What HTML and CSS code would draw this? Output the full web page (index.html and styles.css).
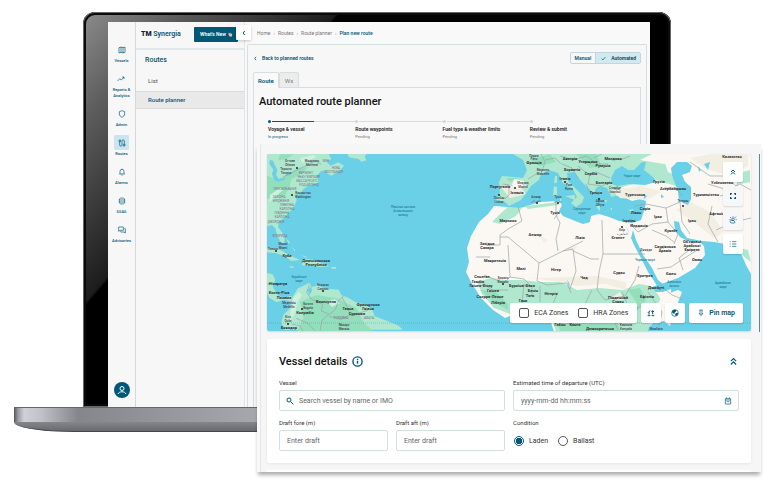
FILE: index.html
```html
<!DOCTYPE html>
<html lang="en">
<head>
<meta charset="utf-8">
<title>TM Synergia – Plan new route</title>
<link rel="stylesheet" href="styles.css">
</head>
<body>
<div class="stage">
  <div class="laptop">
    <div class="screen">
      <nav class="rail">
        <a class="rail-item" href="#"><span class="tile"><svg viewBox="0 0 24 24"><path d="M3 5l6-2 6 2 6-2v16l-6 2-6-2-6 2zM9 3v16M15 5v16"/></svg></span>Vessels</a>
        <a class="rail-item" href="#"><span class="tile"><svg viewBox="0 0 24 24"><path d="M2 18l6-7 5 4 8-9M15 6h6v6"/></svg></span>Reports &amp;<br>Analytics</a>
        <a class="rail-item" href="#"><span class="tile"><svg viewBox="0 0 24 24"><path d="M12 2l8 3v7c0 5-4 8-8 10-4-2-8-5-8-10V5z"/></svg></span>Admin</a>
        <a class="rail-item" href="#"><span class="tile tile-on"><svg viewBox="0 0 24 24"><path d="M5 8v10a3 3 0 0 0 7 0V6a3 3 0 0 1 7 0v10M3 3h5v5H3zM16 16h5v5h-5z"/></svg></span>Routes</a>
        <a class="rail-item" href="#"><span class="tile"><svg viewBox="0 0 24 24"><path d="M4 18h16M6 18v-8a6 6 0 0 1 12 0v8M12 2v2M10 21h4"/></svg></span>Alarms</a>
        <a class="rail-item" href="#"><span class="tile"><svg viewBox="0 0 24 24"><path d="M4 6c0-4 16-4 16 0v12c0 4-16 4-16 0zM4 9h16M4 15h16"/></svg></span>SSAS</a>
        <a class="rail-item" href="#"><span class="tile"><svg viewBox="0 0 24 24"><path d="M2 3h14v10H6l-4 3zM19 8h3v13l-4-3H8v-2"/></svg></span>Advisories</a>
        <button class="avatar" aria-label="Account"><svg viewBox="0 0 24 24"><circle cx="12" cy="9" r="4"/><path d="M4 20c2-6 14-6 16 0"/></svg></button>
      </nav>
      <aside class="panel">
        <div class="panel-head">
          <span class="logo"><b>TM</b> Synergia</span>
          <button class="news">What's New <svg viewBox="0 0 12 12"><path d="M2 1l4 3V1l4 5-1 5H4L1 6z" fill="#e9c9bd"/><path d="M3 3l4 5" stroke="#80606a"/></svg></button>
        </div>
        <h2 class="panel-title">Routes</h2>
        <a class="panel-link" href="#">List</a>
        <a class="panel-link panel-link-on" href="#">Route planner</a>
      </aside>
      <main class="main">
        <div class="crumb-row">
          <button class="collapse" aria-label="Collapse menu"><svg viewBox="0 0 24 24"><path d="M15 4l-7 8 7 8"/></svg></button>
          <a href="#">Home</a><i>›</i><a href="#">Routes</a><i>›</i><a href="#">Route planner</a><i>›</i><a class="here" href="#">Plan new route</a>
        </div>
        <div class="frame">
          <div class="frame-top">
            <a class="back" href="#"><svg viewBox="0 0 24 24"><path d="M15 4l-7 8 7 8"/></svg>Back to planned routes</a>
            <div class="toggle"><button>Manual</button><button class="on"><svg viewBox="0 0 24 24"><path d="M3 12l6 7L21 5"/></svg>Automated</button></div>
          </div>
          <div class="tabs"><button class="tab tab-on">Route</button><button class="tab">Wx</button></div>
          <div class="tab-body">
            <h1>Automated route planner</h1>
            <ol class="steps">
              <li class="step active"><span class="track"></span><b>Voyage &amp; vessel</b><small>In progress</small></li>
              <li class="step"><span class="track"></span><b>Route waypoints</b><small>Pending</small></li>
              <li class="step"><span class="track"></span><b>Fuel type &amp; weather limits</b><small>Pending</small></li>
              <li class="step"><span class="track last"></span><b>Review &amp; submit</b><small>Pending</small></li>
            </ol>
          </div>
        </div>
      </main>
    </div>
  </div>
  <div class="base"><div class="base-top"></div><div class="base-foot"></div></div>

  <div class="sheet">
    <div class="map">
      <svg class="chart" viewBox="267 154 484 177" preserveAspectRatio="xMidYMid slice" role="img" aria-label="Map">
        <rect class="sea" x="267" y="154" width="484" height="177"/>
        <!-- North and South America -->
        <g transform="translate(260 145) scale(.33333)">
          <path class="green" d="M20 26H205L214 42 200 52 212 62 235 52 252 62 238 78 214 92 196 82 204 74 184 78 170 92 176 112 162 118 142 124 128 134 122 146 106 150 110 166 102 186 88 202 70 220 56 234 54 246 66 262 74 280 72 296 62 292 52 272 46 250 36 240 20 244Z"/>
          <path class="green" d="M262 26H320L314 36 320 46 304 50 296 42 280 40 266 36Z"/>
          <path class="deep" d="M20 90l30 14 34-16 30-20 30-2-20 22-30 14-6 26-14 24-54 10ZM60 28l40 0-20 14-26 4Z"/>
          <path class="water" d="M30 44l10 4 4 12 8 14-4 16 8 12 22-4-4 6-20 6-12-6-6-18 4-12-12-18ZM78 86l22-4-14 10-10 2Z"/>
          <path class="green" d="M20 311l22-2 24 8 22 14 32 14-26 3-18-13-26-10-30-3ZM126 344l28-2 24 8 30 14-26 2-18-2-38-3ZM88 362l16 4-10 4ZM214 366l14 0 0 5-14 0ZM78 280l12 12-4 4ZM96 306l10 10-2 3ZM122 330l20 6-4 2Z"/>
          <path class="green" d="M20 384l18 4 8 16-8 20 14 26 22 8 20-6 8 14-12 2-20-4-20 8-22-14-8-18ZM100 452l14-22 34-16 6 10-12 12 6 14 8-12-2-12 26-6 10 10 46 4 8 16 20 8 24 14 30 8 18 12 8 22 38 14 34 14 12 12H74l-10-20 6-24 18-18 8-26Z"/>
          <path class="deep" d="M120 470l50-20 60 10 60 30 20 40 30 30H110l20-40Z"/>
          <path class="cloud" d="M100 458l16-18 10 10-14 22-6 30-16 30 2-36ZM200 470l24-8 16 12-24 12ZM300 500l22 4-10 10ZM30 150l30-22 8 8-40 36ZM120 40l40-10 10 6-42 18Z"/>
          <path class="line" d="M70 96l22-12 46-22 30-14 16 10M148 420l-8 22 14 20 34 16-4 20 24 10 18-14 10-28 18-16M206 508l-20 18-6 32M246 456l12 24 14 30 26-6 26-8M272 510l-30 14-34-10M108 520l34 14 26 26M20 418l22-4M60 458l8-8M96 538l24 4 10 18"/>
        </g>
        <!-- Europe, Africa, Arabia and Asia -->
        <path class="sand" d="M508 207l8 2 8-2 16-5 19-1 3 4-3 6 4 5 12 5 8 3 7-2 1-6 8-2 10 3 10 4 13 2 9-3 4-12 1-7-6-2-8 2-8-4-10-2-4-10 2-6 8-6 8-4V154H751V274l-5-9-6-14-9-3-6-4-11-2-12-1-15-3-6-8-2-8-5-1 1 9 5 7 8 4 7 1 4-1 5 5 1 9-10 13-17 10-14 5-12 4-6 2 8 3 9 0 8-3 0 7-7 14-12 14-14 12H556l-4-10-3-12-10-4-12 4-12 0-10 4-12-8-12-12-10-16-5-10 3-10-2-14 4-12 8-14 9-8 6-8Z"/>
        <path class="green" d="M513 154l10 6 4 10-4 8-21-2-3 6 1 10-4 8 9 2 4 4 12-6 6-8 4-6 8-6 2-6 8-4 9 3 5 10 9 5 5 9-6 6 5 4 6-4 2-6-8-8-8-8-1-8 7-1 8 10 10 10 8 12 6 8 6-8-2-6 8-4 2-6 6-2 8-2V154Z"/>
        <path class="green" d="M608 154h48l8 6 4 12 8 4 10 6 4 8-14-4-20-6-12 2-30 4-14-4ZM555 176l2 0 0 7-3 0ZM554 186l3 1 0 8-4 0ZM560 198l2 2-2 3ZM565 196l10-1 0 5ZM602 208l10 0 0 2-10 0ZM628 210l6-1-2 3Z"/>
        <path class="green" d="M477 282l14-4 14 2 18 0 16 2 22 0 16 8 22-2 24 2 16-6 12 2 8 10 6 14-12 10-6 12H556l-6-20-12-4-28 6-16-6-12-14ZM508 207l14 1-6 8-16 8-8-2 8-8ZM524 206l36-4-2 3-30 4ZM740 248l8 2 3 12-8-6ZM728 176l22-6 0 12-10 2ZM622 174l32-6 8 6-20 4Z"/>
        <path class="deep" d="M480 290l16 2 12 12 0 6-14-8ZM556 310l30 0 30 6 4 15H560ZM576 154h20l6 12-12 2ZM628 290l12-2 6 12-6 8ZM506 178l12 0-8 4ZM530 160l20-6 6 8-16 4Z"/>
        <path class="tan" d="M530 278l30 4 16 4 30-2 20 6 0-8-30-6-60 2ZM676 210l14-8 20 10 14 20-10 6-20-16ZM690 158l20-4h38l0 12-20 10-24-8ZM612 190l30-4 20 6-16 8-26-2ZM608 300l12-8 4 8ZM500 186l20 0 6 8-16 4ZM660 318l14-12-4 20ZM566 248l12-2-6 6ZM540 236l8 4-4 3Z"/>
        <path class="sand" d="M514 179l10 2 2 5-8 3-6-4ZM640 160l12-6h16l4 8-8 2ZM662 296l16-6 4 2-10 26-12 4-6-10Z"/>
        <!-- Inland and marginal seas -->
        <path class="water" d="M611 178l4-8 7-4 6 4 6 0 8-8 4 0-2 8 9 7 3 5-11 3-16-1-12 2-5-2ZM671 168l6-6 10 0 5 4-2 6-8 3 3 7 6 5 0 12-3 6-9-4-1-10-4-10-2-6ZM625 225l4 8 5 12 9 17 5 10 8 12 3 7 7-1-2-5-6-5-6-12-9-13-7-15-3-10-2 8-3-8ZM704 164l6-2-2 8ZM698 166l3 4-2 2ZM600 186l7 2 6 12-3 12-12-2-5-12 3-10ZM614 188l6 0 0 2-6 0ZM644 194l3 2-3 3ZM661 194l3 3-3 1ZM567 279l3 6-1 2ZM635 303l4 6-3 2Z"/>
        <path class="green" d="M598 190l4 2-2 3ZM604 200l3 0-1 3ZM596 204l4 2 0 5-3-3Z"/>
        <path class="line" d="M518 207l4 14-14 8-8 6v10h-14M500 237l8 0 31 26 24-12 20-10M508 245l2 32-6 6-20-8M476 257h14M556 201l0 14 4 8-4 16 2 12M554 219l6-8M563 251l10-2 3 22-6 18M573 251l18 8 8 0M602 220l1 34h42M603 254l-4 18-2 18 8 10 20-4 10-16 4-14M539 263l-2 18 10 4 20-2 4 10M510 277l14 2 8 8 0 10M524 284l-2 20M484 284l8 6 16 0M540 286l0 16M634 206l12-2 20 4 2 14-16 2-14 8-6-6M666 208l14-6 2 20 8 12M668 222l10 12-4 10M674 242l-8-6-14-6M657 269l14-2 12-8 16-10M683 270l-4-12 10-8M660 285l12 10 10 4M648 292l14 20-4 18M622 292l6 14 20 2M708 184l20 6 12-6 11 6M716 230l18-8 17-4M712 206l-4 18 10 18M690 162l20 14 16 0 10 10M664 188l12 0 6 8M503 184l6 1 0 10-4 4M528 179l10-6M541 154l4 8-4 12M545 160l10-2 6 6M560 156l14 4 12-4 12 8 10 0M578 166l10 8 8-2 14 6M590 174l-2 10 14 2 8-4M594 158l8-4M586 184l4 8M562 164l10 4 6 10M620 160l10-4M592 290l-6 12 0 12M558 292l-6 14M612 316l6 14M740 178l-6 14-14 4"/>
        <path class="equator" d="M267 323H751"/>
        <g class="dots"><circle cx="297" cy="168" r="1"/><circle cx="292" cy="195" r="1"/><circle cx="276" cy="251" r="1"/><circle cx="323" cy="291" r="1"/><circle cx="302" cy="309" r="1"/><circle cx="288" cy="324" r="1"/><circle cx="499" cy="195" r="1"/><circle cx="515" cy="188" r="1"/><circle cx="537" cy="203" r="1"/><circle cx="558" cy="203" r="1"/><circle cx="565" cy="182" r="1"/><circle cx="599" cy="199" r="1"/><circle cx="622" cy="227" r="1"/><circle cx="683" cy="206" r="1"/><circle cx="503" cy="284" r="1"/></g>
        <g class="region">
          <text x="326" y="162">МЕН</text><text x="306" y="174">ВЕРМОНТ</text><text x="336" y="169">НОВА</text><text x="334" y="173">ШОТЛАНДІЯ</text><text x="309" y="178">НЬЮ-ГЕМПШИР</text><text x="307" y="182">МАССАЧУСЕТС</text><text x="309" y="186">РОД-АЙЛЕНД</text><text x="285" y="190">ПЕНСИЛЬВАНІЯ</text><text x="279" y="198">ЗАХІДНА</text><text x="281" y="202">ВІРДЖИНІЯ</text><text x="287" y="206">ПІВНІЧНА</text><text x="287" y="210">КАРОЛІНА</text><text x="282" y="214">ПІВДЕННА</text><text x="282" y="218">КАРОЛІНА</text><text x="276" y="223">ДЖОРДЖІЯ</text><text x="280" y="237">ФЛОРИДА</text><text x="341" y="319">РОРАЙМА</text><text x="369" y="319">АМАПА</text>
        </g>
        <g class="ocean">
          <text x="403" y="208">Північна частина</text><text x="403" y="212">Атлантичного</text><text x="403" y="216">океану</text><text x="299" y="278">Карибське</text><text x="299" y="282">море</text><text x="582" y="210">Середземне</text><text x="582" y="214">море</text><text x="632" y="177">Чорне море</text><text x="723" y="284">Аравійське</text><text x="723" y="288">море</text><text x="674" y="283">Аденська</text><text x="674" y="287">затока</text><text x="645" y="261">Червоне море</text>
        </g>
        <g class="city">
          <text x="290" y="162">Оттава</text><text x="290" y="166">Ottawa</text><text x="312" y="162">Монреаль</text><text x="312" y="166">Montreal</text><text x="286" y="170">Торонто</text><text x="286" y="174">Toronto</text><text x="303" y="194">Вашингтон</text><text x="303" y="198">Washington</text><text x="283" y="245">Маямі</text><text x="283" y="249">Miami</text><text x="273" y="250">Гавана</text><text x="323" y="286">Каракас</text><text x="323" y="290">Caracas</text><text x="289" y="304">Медельїн</text><text x="289" y="308">Medellin</text><text x="308" y="305">Богота</text><text x="308" y="309">Bogota</text><text x="288" y="318">Кіто</text><text x="288" y="322">Quito</text><text x="344" y="326">Манаус</text><text x="344" y="330">Manaus</text><text x="534" y="157">Париж</text><text x="534" y="160">Paris</text><text x="523" y="184">Мадрид</text><text x="523" y="188">Madrid</text><text x="499" y="199">Лісабон</text><text x="499" y="203">Lisboa</text><text x="543" y="171">Марсель</text><text x="543" y="175">Marseille</text><text x="569" y="186">Рим</text><text x="569" y="190">Roma</text><text x="536" y="198">Алжир</text><text x="536" y="202">الجزائر</text><text x="558" y="198">Туніс</text><text x="558" y="202">تونس</text><text x="600" y="202">Афіни</text><text x="600" y="206">Αθήνα</text><text x="615" y="189">Стамбул</text><text x="615" y="193">İstanbul</text><text x="622" y="231">Каїр</text><text x="622" y="235">القاهرة</text><text x="683" y="202">Тегеран</text><text x="646" y="251">Джидда</text><text x="503" y="279">Бамако</text><text x="503" y="283">Bamako</text><text x="626" y="326">Кампала</text><text x="626" y="330">Kampala</text><text x="656" y="330">Момбаса</text>
        </g>
        <g class="country">
          <text x="287" y="257">Куба</text><text x="316" y="262">Домініканська</text><text x="316" y="266">Республіка</text><text x="278" y="285">Нікарагуа</text><text x="279" y="294">Коста-Ріка</text><text x="284" y="299">Панама</text><text x="326" y="303">Венесуела</text><text x="305" y="314">Колумбія</text><text x="348" y="310">Гаяна</text><text x="368" y="306">Французька</text><text x="368" y="310">Гвіана</text><text x="357" y="315">Суринам</text><text x="289" y="329">Еквадор</text>
          <text x="534" y="164">Франція</text><text x="570" y="160">Австрія</text><text x="588" y="163">Угорщина</text><text x="613" y="160">Молдова</text><text x="603" y="167">Румунія</text><text x="572" y="171">Хорватія</text><text x="591" y="175">Сербія</text><text x="604" y="184">Болгарія</text><text x="565" y="180">Італія</text><text x="500" y="188">Португалія</text><text x="517" y="194">Іспанія</text><text x="596" y="194">Греція</text><text x="635" y="196">Туреччина</text><text x="659" y="183">Грузія</text><text x="673" y="190">Азербайджан</text><text x="706" y="196">Туркменістан</text><text x="722" y="184">Узбекистан</text><text x="732" y="158">Казахстан</text><text x="645" y="210">Сирія</text><text x="636" y="214">Ліван</text><text x="629" y="222">Ізраїль</text><text x="639" y="227">Йорданія</text><text x="658" y="218">Ірак</text><text x="692" y="222">Іран</text><text x="720" y="215">Афганістан</text><text x="671" y="232">Кувейт</text><text x="508" y="222">Марокко</text><text x="555" y="214">Туніс</text><text x="535" y="236">Алжир</text><text x="580" y="239">Лівія</text><text x="618" y="239">Єгипет</text><text x="487" y="245">Західна</text><text x="487" y="249">Сахара</text><text x="495" y="262">Мавританія</text><text x="521" y="270">Малі</text><text x="556" y="271">Нігер</text><text x="584" y="279">Чад</text><text x="619" y="274">Судан</text><text x="645" y="277">Еритрея</text><text x="665" y="248">Саудівська</text><text x="665" y="252">Аравія</text><text x="692" y="243">Об’єднані</text><text x="692" y="247">Арабські</text><text x="692" y="251">Емірати</text><text x="697" y="261">Оман</text><text x="671" y="275">Ємен</text><text x="656" y="289">Джибуті</text><text x="647" y="298">Ефіопія</text><text x="618" y="299">Південний</text><text x="618" y="303">Судан</text><text x="482" y="278">Сенегал</text><text x="478" y="283">Гамбія</text><text x="481" y="287">Гвінея-Бісау</text><text x="493" y="292">Гвінея</text><text x="490" y="298">Сьєрра-Леоне</text><text x="498" y="304">Ліберія</text><text x="522" y="287">Буркіна-Фасо</text><text x="533" y="292">Бенін</text><text x="530" y="297">Того</text><text x="523" y="302">Гана</text><text x="551" y="295">Нігерія</text><text x="560" y="326">Габон</text><text x="575" y="326">Конго</text><text x="600" y="330">Демократична</text>
        </g>
      </svg>
      <div class="tools">
        <button aria-label="Collapse"><svg viewBox="0 0 24 24"><path d="M6 12l6-6 6 6M6 19l6-6 6 6"/></svg></button>
        <button class="muted" aria-label="Full screen"><svg viewBox="0 0 24 24"><path class="fill" d="M3 3h6v2H7v4H3zM15 3h6v6h-4V5h-2zM3 15h4v4h2v2H3zM17 15h4v6h-6v-2h2z"/></svg></button>
        <button class="muted" aria-label="Weather"><svg class="fine" viewBox="0 0 24 24"><circle cx="12" cy="10" r="4"/><path d="M12 1v3M3 3l3 3M1 11h4M21 2l-4 4M20 11h3M6 20c-4 0-4-6 1-6 2-3 7-2 8 2 4 0 4 5 0 5H6"/></svg></button>
        <button aria-label="Layers"><svg class="fine" viewBox="0 0 24 24"><path d="M9 5h13M9 12h13M9 19h13M2 5h3M2 12h3M2 19h3"/></svg></button>
      </div>
      <div class="map-bar">
        <div class="zones">
          <label><input type="checkbox">ECA Zones</label>
          <label><input type="checkbox">HRA Zones</label>
        </div>
        <button class="square" aria-label="Route"><svg viewBox="0 0 24 24"><path d="M2 20h8M14 20h8M6 17V8l4-3M6 8L3 11M17 16V5M13 9l4-4 4 4"/></svg></button>
        <button class="square" aria-label="Globe"><svg class="fine" viewBox="0 0 24 24"><circle cx="12" cy="12" r="10"/><path class="fill" d="M10 2l7 2-3 4-3 2 1 3-4 1-5-4c0-4 3-7 7-8zM14 13l6-2 1 5-6 5-3-3z"/></svg></button>
        <button class="pin"><svg class="fine" viewBox="0 0 24 24"><path d="M7 3h10M9 3v8l-3 4h12l-3-4V3M12 15v7"/></svg>Pin map</button>
      </div>
    </div>

    <section class="details">
      <div class="details-head">
        <h2>Vessel details</h2>
        <svg class="info" viewBox="0 0 24 24"><circle cx="12" cy="12" r="10"/><path d="M12 11v6M12 6v3"/></svg>
        <button aria-label="Collapse section"><svg viewBox="0 0 24 24"><path d="M5 11l7-7 7 7M5 20l7-7 7 7"/></svg></button>
      </div>
      <form class="grid">
        <div class="field wide"><label for="vessel">Vessel</label><div class="box"><svg viewBox="0 0 24 24"><circle cx="9" cy="9" r="6"/><path d="M14 14l8 8"/></svg><input id="vessel" type="text" placeholder="Search vessel by name or IMO"></div></div>
        <div class="field wide"><label for="etd">Estimated time of departure (UTC)</label><div class="box"><input id="etd" type="text" placeholder="yyyy-mm-dd hh:mm:ss"><svg class="fine" viewBox="0 0 24 24"><path d="M4 5h16v16H4zM4 9h16M8 1v4M16 1v4M8 14h8"/></svg></div></div>
        <div class="field"><label for="fore">Draft fore (m)</label><div class="box"><input id="fore" type="text" placeholder="Enter draft"></div></div>
        <div class="field"><label for="aft">Draft aft (m)</label><div class="box"><input id="aft" type="text" placeholder="Enter draft"></div></div>
        <fieldset class="field wide"><legend>Condition</legend><div class="radios"><label><input type="radio" name="cond" checked>Laden</label><label><input type="radio" name="cond">Ballast</label></div></fieldset>
      </form>
    </section>
    <div class="next"></div>
  </div>
</div>
</body>
</html>
```
FILE: styles.css
```css
* { box-sizing: border-box; }
body { margin: 0; background: #fff; font-family: Roboto, "Liberation Sans", sans-serif; color: #1c2224; }
button, input { font: inherit; color: inherit; }
button { border: 0; padding: 0; background: none; display: flex; align-items: center; justify-content: center; }
a { color: inherit; text-decoration: none; }
h1, h2, ol, fieldset { margin: 0; padding: 0; border: 0; }
svg { display: block; fill: none; stroke: #005776; stroke-width: 2; flex: none; }
svg .fill { fill: #005776; stroke: none; }

.stage { position: relative; min-height: 480px; padding-top: 12px; overflow: hidden; }
.laptop {
  margin: 0 93px 0 83px;
  padding: 10px 21px 0 25px;
  border-radius: 12px 12px 0 0;
  background: linear-gradient(131deg, #8c8c8c 0, #5e5e5e 70px, #1c1c1c 192px, #000 195px);
  box-shadow: inset 0 0 0 1px #666, inset 0 0 0 3px #0a0a0a;
}
.screen { display: flex; min-height: 385px; background: #f7f7f7; }

.rail { width: 28px; padding: 20px 0 9px; display: flex; flex-direction: column; align-items: center; gap: 7px; border-right: 1px solid #d4d8da; }
.rail-item { display: flex; flex-direction: column; align-items: center; font-size: 4px; line-height: 6px; font-weight: 500; color: #005776; text-align: center; }
.tile { width: 15px; height: 15px; margin-bottom: 1px; display: grid; place-items: center; border-radius: 1px; }
.tile svg { width: 8px; height: 8px; }
.tile-on { background: #c9e6ee; }
.avatar { margin-top: auto; width: 16px; height: 16px; border-radius: 50%; background: #005776; }
.avatar svg { width: 12px; height: 12px; stroke: #fff; }

.panel { width: 109px; border-right: 1px solid #e0e4e5; }
.panel-head { height: 28px; padding: 0 6px 2px 5px; display: flex; align-items: center; justify-content: space-between; border-bottom: 2px solid #e2e8e9; }
.logo { font-size: 7px; font-weight: 600; color: #005776; }
.logo b { color: #14213f; }
.news { height: 15px; padding: 0 5px 0 6px; gap: 2px; border-radius: 1px; background: #005776; color: #fff; font-size: 5px; font-weight: 600; }
.news svg { width: 5px; height: 5px; stroke-width: 1; stroke: none; }
.panel-title { padding: 6px 9px 8px; font-size: 7px; line-height: 9px; font-weight: 500; color: #005776; }
.panel-link { display: block; padding: 0 12px; font-size: 6px; line-height: 16px; color: #555; }
.panel-link-on { margin-top: 2px; border: solid #d8dadb; border-width: 1px 0; background: #e9e9e9; color: #005776; font-weight: 500; }

.main { flex: 1; min-width: 0; padding: 0 3px 0 2px; display: flex; flex-direction: column; background: #f9f9f9; }
.crumb-row { position: relative; height: 22px; padding-left: 10px; display: flex; align-items: center; gap: 3px; font-size: 5px; color: #777; }
.crumb-row i { font-style: normal; color: #999; }
.crumb-row .here { color: #005776; font-weight: 500; }
.collapse { position: absolute; left: -11px; top: 3px; width: 15px; height: 15px; border-radius: 1px; background: #fff; box-shadow: 0 1px 3px #0003; }
.collapse svg { width: 6px; height: 6px; stroke-width: 4; }
.frame { flex: 1; display: flex; flex-direction: column; padding: 7px 5px 0 5px; border: 1px solid #d5dfe1; border-bottom: 0; border-radius: 2px 2px 0 0; background: #f7f7f7; }
.frame-top { display: flex; justify-content: space-between; align-items: center; }
.back { display: flex; align-items: center; gap: 4px; font-size: 5px; font-weight: 600; color: #005776; }
.back svg { width: 5px; height: 5px; stroke-width: 4; }
.toggle { display: flex; height: 12px; border: 1px solid #c3d6db; border-radius: 2px; overflow: hidden; font-size: 5px; font-weight: 600; color: #005776; }
.toggle button { padding: 0 4px; gap: 5px; }
.toggle .on { padding: 0 4px 0 5px; background: #cfeaf0; color: #1c3a45; border-left: 1px solid #c3d6db; }
.toggle svg { width: 5px; height: 5px; stroke: #1c3a45; stroke-width: 3; }
.tabs { display: flex; margin-top: 8px; }
.tab { height: 15px; padding: 0 5px; border: 1px solid #d5dfe1; border-bottom: 0; border-radius: 2px 2px 0 0; background: #ececec; font-size: 6px; color: #777; }
.tab-on { position: relative; margin-bottom: -1px; height: 16px; padding: 0 4px; background: #f9f9f9; color: #005776; font-weight: 600; }
.tab-body { flex: 1; padding: 7px 5px 0; border: 1px solid #d5dfe1; border-bottom: 0; background: #f8f8f8; }
h1 { font-size: 11px; line-height: 14px; font-weight: 500; color: #111; }
.steps { display: grid; grid-template-columns: repeat(4, 1fr); margin: 11px 18px 0 9px; list-style: none; }
.step { display: flex; flex-direction: column; white-space: nowrap; color: #777; }
.step b { margin-top: 3px; font-size: 5px; line-height: 7px; font-weight: 600; color: #222; }
.step small { font-size: 4px; line-height: 7px; }
.track { display: flex; align-items: center; gap: 1px; height: 3px; }
.track::before { content: ""; width: 3px; height: 3px; border-radius: 50%; background: #cdd8dc; }
.track::after { content: ""; flex: 1; height: 1px; background: #d3dcdf; }
.track.last::after { display: none; }
.active .track::before { background: #005776; }
.active .track::after { background: linear-gradient(90deg, #005776 50%, #d3dcdf 50%); }
.active small { color: #005776; }

.base { margin: 0 14px; }
.base-top { height: 15px; border-top: 1px solid #66676c; background: linear-gradient(90deg, #55565a 0, #9a9ba0 4px, #d0d1d6 10px, #c2c3c8 26px, #85868b 64px, #a6a7ac 240px, #85868b 100%); }
.base-foot { height: 10px; border-bottom: 1px solid #45464b; border-radius: 0 0 60px 60px / 0 0 10px 10px; background: linear-gradient(#85868b, #696a70); }

.sheet { position: absolute; left: 257px; right: 3px; top: 144px; padding: 10px 10px 0; background: #f6f6f6; box-shadow: 0 4px 4px -1px #0005, inset 3px 0 0 #f9f9f9, inset 4px 0 0 #e6e6e6; }
.sheet::after { content: ""; position: absolute; right: 1px; top: 10px; width: 1px; height: 178px; background: #4d8ba3; }
.map { position: relative; border-radius: 2px; overflow: hidden; box-shadow: 0 1px 2px #0002; }
.chart { width: 100%; aspect-ratio: 484 / 177; stroke: none; }
.sea, .water { fill: #69d0e8; }
.green { fill: #b0e8cf; }
.deep { fill: #93dfbc; }
.cloud { fill: #cdf0df; }
.sand { fill: #fbf8f4; }
.tan { fill: #f3eee2; }
.line { stroke: #9aa5a3; stroke-width: 0.7px; vector-effect: non-scaling-stroke; }
.equator { stroke: #4a9cb0; stroke-width: 0.5px; stroke-dasharray: 1 1; }
.dots { fill: #222; }
.chart text { text-anchor: middle; }
.country { font-size: 4px; font-weight: 700; fill: #2e2e32; }
.city { font-size: 3px; font-weight: 500; fill: #404048; }
.region { font-size: 3px; fill: #796f85; }
.ocean { font-size: 3px; font-weight: 500; fill: #297f98; }

.tools { position: absolute; right: 8px; top: 8px; display: grid; gap: 4px; }
.tools button, .square { width: 20px; height: 20px; }
.tools button, .map-bar > * { border-radius: 2px; background: #fff; box-shadow: 0 1px 2px #0002; }
.tools .muted { background: #f6f7f8; }
.tools svg { width: 8px; height: 8px; stroke-width: 3; }
.map-bar { position: absolute; right: 8px; bottom: 8px; display: flex; gap: 4px; height: 20px; font-size: 7px; }
.zones { display: flex; align-items: center; gap: 10px; padding: 0 9px; }
.zones label, .radios label { display: flex; align-items: center; gap: 5px; color: #333; }
input[type="checkbox"] { appearance: none; width: 10px; height: 10px; margin: 0; border: 1px solid #555; border-radius: 2px; background: #fff; }
.square svg, .pin svg { width: 8px; height: 8px; stroke-width: 3; }
.pin { padding: 0 8px; gap: 4px; color: #005776; font-weight: 600; }

.details { margin-top: 8px; padding: 12px; border-radius: 2px; background: #fff; box-shadow: 0 1px 3px #0001; }
.details-head { display: flex; align-items: center; height: 20px; margin-bottom: 8px; gap: 5px; }
.details-head h2 { font-size: 11px; font-weight: 500; color: #111; }
.info { width: 11px; height: 11px; stroke-width: 3; }
.details-head button { margin-left: auto; width: 12px; height: 12px; }
.details-head button svg { width: 9px; height: 9px; stroke-width: 3; }
.grid { display: grid; grid-template-columns: repeat(4, 1fr); gap: 8px; }
.field { min-width: 0; display: flex; flex-direction: column; gap: 3px; }
.wide { grid-column: span 2; }
.field > label, legend { padding: 0; font-size: 6px; line-height: 8px; color: #333; }
.box { height: 21px; display: flex; align-items: center; gap: 4px; padding: 0 6px; border: 1px solid #d3dee1; border-radius: 2px; background: #fff; }
.box svg { width: 8px; height: 8px; stroke-width: 3; }
.tools svg.fine, .square svg.fine, .pin svg.fine, .box svg.fine { stroke-width: 2; }
.box input { flex: 1; min-width: 0; padding: 0 1px; border: 0; outline: 0; background: none; font-size: 7px; }
.box input::placeholder { color: #5f6668; opacity: 1; }
.radios { display: flex; align-items: center; gap: 10px; height: 21px; margin-top: 3px; padding-left: 1px; font-size: 7px; }
.radios input { appearance: none; width: 10px; height: 10px; margin: 0; border: 1px solid #555; border-radius: 50%; background: #fff; }
.radios input:checked { border-color: #005776; background: radial-gradient(circle, #005776 0 3px, #fff 3px); }
.next { margin-top: 7px; height: 2px; background: #fff; }
```
